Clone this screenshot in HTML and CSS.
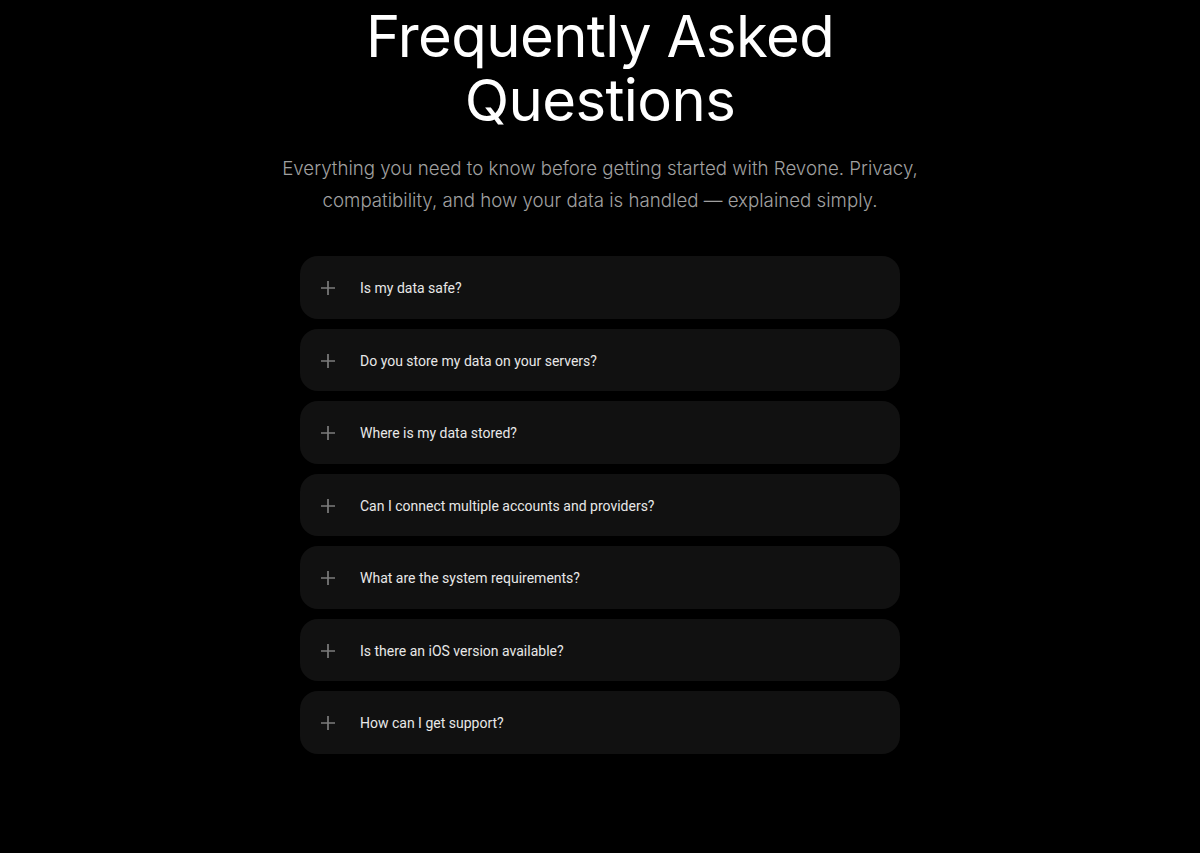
FILE: index.html
```html
<!DOCTYPE html>
<html lang="en">
<head>
<meta charset="utf-8">
<title>FAQ</title>
<link rel="stylesheet" href="styles.css">
</head>
<body>
<section class="faq">
  <h1 class="faq-title">Frequently Asked<br>Questions</h1>
  <p class="faq-sub">Everything you need to know before getting started with Revone. Privacy, compatibility, and how your data is handled — explained simply.</p>
  <div class="faq-list">
    <div class="faq-item"><svg class="plus" viewBox="0 0 16 16"><path d="M8 1v14M1 8h14"/></svg><span>Is my data safe?</span></div>
    <div class="faq-item"><svg class="plus" viewBox="0 0 16 16"><path d="M8 1v14M1 8h14"/></svg><span>Do you store my data on your servers?</span></div>
    <div class="faq-item"><svg class="plus" viewBox="0 0 16 16"><path d="M8 1v14M1 8h14"/></svg><span>Where is my data stored?</span></div>
    <div class="faq-item"><svg class="plus" viewBox="0 0 16 16"><path d="M8 1v14M1 8h14"/></svg><span>Can I connect multiple accounts and providers?</span></div>
    <div class="faq-item"><svg class="plus" viewBox="0 0 16 16"><path d="M8 1v14M1 8h14"/></svg><span>What are the system requirements?</span></div>
    <div class="faq-item"><svg class="plus" viewBox="0 0 16 16"><path d="M8 1v14M1 8h14"/></svg><span>Is there an iOS version available?</span></div>
    <div class="faq-item"><svg class="plus" viewBox="0 0 16 16"><path d="M8 1v14M1 8h14"/></svg><span>How can I get support?</span></div>
  </div>
</section>
</body>
</html>
```
FILE: styles.css
```css
html, body {
  margin: 0;
  padding: 0;
  background: #000;
}
body {
  font-family: Inter, "Noto Sans", sans-serif;
  color: #fff;
}
.faq {
  display: flex;
  flex-direction: column;
  align-items: center;
  padding-top: 4px;
}
.faq-title {
  margin: 0;
  font-size: 58px;
  line-height: 64px;
  font-weight: 400;
  letter-spacing: -0.6px;
  text-align: center;
}
.faq-sub {
  margin: 21px 0 0;
  width: 660px;
  font-size: 18.7px;
  line-height: 31.5px;
  font-weight: 300;
  color: #a0a0a0;
  text-align: center;
}
.faq-list {
  margin-top: 40px;
  width: 600px;
  display: flex;
  flex-direction: column;
  gap: 10px;
}
.faq-item {
  display: flex;
  align-items: center;
  gap: 24px;
  height: 62.5px;
  box-sizing: border-box;
  padding: 2px 20px 0;
  background: #111111;
  border-radius: 18px;
  font-family: Roboto, "Noto Sans", sans-serif;
  font-size: 14px;
  font-weight: 400;
  color: #e8e8e8;
}
.plus {
  width: 16px;
  height: 16px;
  flex: none;
  fill: none;
  stroke: #7c7c7c;
  stroke-width: 1.7;
}
```
